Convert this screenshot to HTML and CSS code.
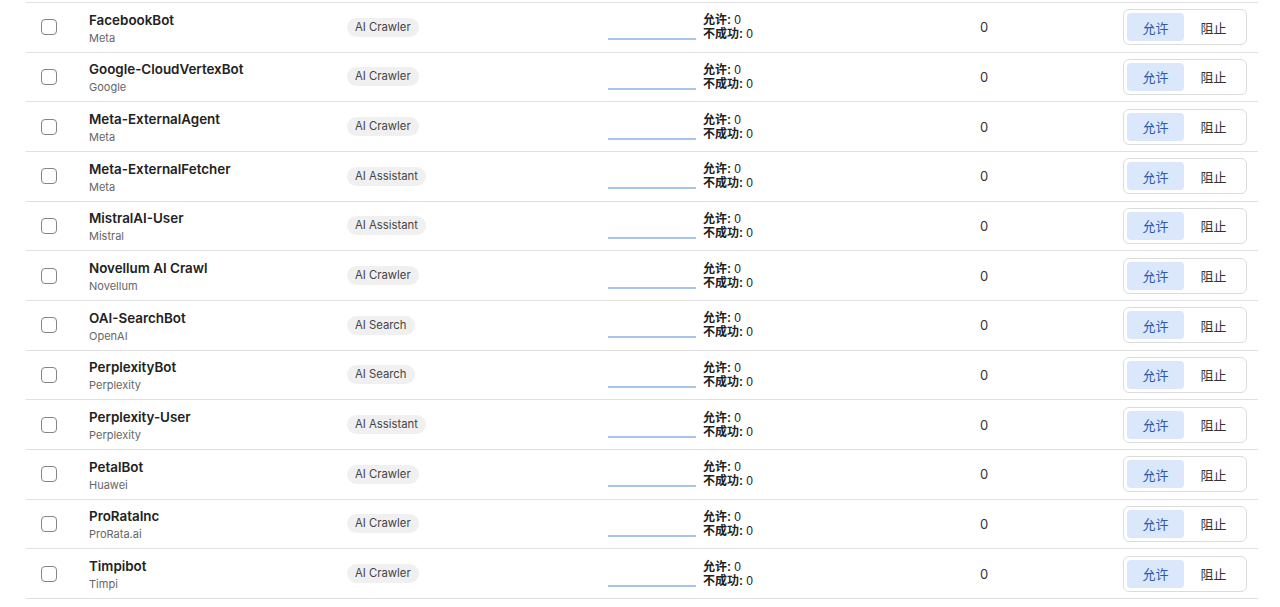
FILE: index.html
```html
<!DOCTYPE html>
<html lang="zh-CN">
<head>
  <meta charset="UTF-8" />
  <meta name="viewport" content="width=device-width, initial-scale=1.0" />
  <title>AI Crawlers</title>
  <link rel="stylesheet" href="styles.css">
</head>
<body>
  <div class="container">
    <div class="bot-table">

      <div class="bot-row">
        <div class="cell-check"><input type="checkbox" class="check" /></div>
        <div class="cell-name"><div class="bot-name">FacebookBot</div><div class="bot-owner">Meta</div></div>
        <div class="cell-type"><span class="tag">AI Crawler</span></div>
        <div class="cell-activity">
          <svg class="spark" width="88" height="28" viewBox="0 0 88 28"><line x1="0" y1="26" x2="88" y2="26" /></svg>
          <div class="stats"><div><b>允许:</b> 0</div><div><b>不成功:</b> 0</div></div>
        </div>
        <div class="cell-count">0</div>
        <div class="cell-actions"><div class="seg"><button class="seg-btn active">允许</button><button class="seg-btn">阻止</button></div></div>
      </div>

      <div class="bot-row">
        <div class="cell-check"><input type="checkbox" class="check" /></div>
        <div class="cell-name"><div class="bot-name">Google-CloudVertexBot</div><div class="bot-owner">Google</div></div>
        <div class="cell-type"><span class="tag">AI Crawler</span></div>
        <div class="cell-activity">
          <svg class="spark" width="88" height="28" viewBox="0 0 88 28"><line x1="0" y1="26" x2="88" y2="26" /></svg>
          <div class="stats"><div><b>允许:</b> 0</div><div><b>不成功:</b> 0</div></div>
        </div>
        <div class="cell-count">0</div>
        <div class="cell-actions"><div class="seg"><button class="seg-btn active">允许</button><button class="seg-btn">阻止</button></div></div>
      </div>

      <div class="bot-row">
        <div class="cell-check"><input type="checkbox" class="check" /></div>
        <div class="cell-name"><div class="bot-name">Meta-ExternalAgent</div><div class="bot-owner">Meta</div></div>
        <div class="cell-type"><span class="tag">AI Crawler</span></div>
        <div class="cell-activity">
          <svg class="spark" width="88" height="28" viewBox="0 0 88 28"><line x1="0" y1="26" x2="88" y2="26" /></svg>
          <div class="stats"><div><b>允许:</b> 0</div><div><b>不成功:</b> 0</div></div>
        </div>
        <div class="cell-count">0</div>
        <div class="cell-actions"><div class="seg"><button class="seg-btn active">允许</button><button class="seg-btn">阻止</button></div></div>
      </div>

      <div class="bot-row">
        <div class="cell-check"><input type="checkbox" class="check" /></div>
        <div class="cell-name"><div class="bot-name">Meta-ExternalFetcher</div><div class="bot-owner">Meta</div></div>
        <div class="cell-type"><span class="tag">AI Assistant</span></div>
        <div class="cell-activity">
          <svg class="spark" width="88" height="28" viewBox="0 0 88 28"><line x1="0" y1="26" x2="88" y2="26" /></svg>
          <div class="stats"><div><b>允许:</b> 0</div><div><b>不成功:</b> 0</div></div>
        </div>
        <div class="cell-count">0</div>
        <div class="cell-actions"><div class="seg"><button class="seg-btn active">允许</button><button class="seg-btn">阻止</button></div></div>
      </div>

      <div class="bot-row">
        <div class="cell-check"><input type="checkbox" class="check" /></div>
        <div class="cell-name"><div class="bot-name">MistralAI-User</div><div class="bot-owner">Mistral</div></div>
        <div class="cell-type"><span class="tag">AI Assistant</span></div>
        <div class="cell-activity">
          <svg class="spark" width="88" height="28" viewBox="0 0 88 28"><line x1="0" y1="26" x2="88" y2="26" /></svg>
          <div class="stats"><div><b>允许:</b> 0</div><div><b>不成功:</b> 0</div></div>
        </div>
        <div class="cell-count">0</div>
        <div class="cell-actions"><div class="seg"><button class="seg-btn active">允许</button><button class="seg-btn">阻止</button></div></div>
      </div>

      <div class="bot-row">
        <div class="cell-check"><input type="checkbox" class="check" /></div>
        <div class="cell-name"><div class="bot-name">Novellum AI Crawl</div><div class="bot-owner">Novellum</div></div>
        <div class="cell-type"><span class="tag">AI Crawler</span></div>
        <div class="cell-activity">
          <svg class="spark" width="88" height="28" viewBox="0 0 88 28"><line x1="0" y1="26" x2="88" y2="26" /></svg>
          <div class="stats"><div><b>允许:</b> 0</div><div><b>不成功:</b> 0</div></div>
        </div>
        <div class="cell-count">0</div>
        <div class="cell-actions"><div class="seg"><button class="seg-btn active">允许</button><button class="seg-btn">阻止</button></div></div>
      </div>

      <div class="bot-row">
        <div class="cell-check"><input type="checkbox" class="check" /></div>
        <div class="cell-name"><div class="bot-name">OAI-SearchBot</div><div class="bot-owner">OpenAI</div></div>
        <div class="cell-type"><span class="tag">AI Search</span></div>
        <div class="cell-activity">
          <svg class="spark" width="88" height="28" viewBox="0 0 88 28"><line x1="0" y1="26" x2="88" y2="26" /></svg>
          <div class="stats"><div><b>允许:</b> 0</div><div><b>不成功:</b> 0</div></div>
        </div>
        <div class="cell-count">0</div>
        <div class="cell-actions"><div class="seg"><button class="seg-btn active">允许</button><button class="seg-btn">阻止</button></div></div>
      </div>

      <div class="bot-row">
        <div class="cell-check"><input type="checkbox" class="check" /></div>
        <div class="cell-name"><div class="bot-name">PerplexityBot</div><div class="bot-owner">Perplexity</div></div>
        <div class="cell-type"><span class="tag">AI Search</span></div>
        <div class="cell-activity">
          <svg class="spark" width="88" height="28" viewBox="0 0 88 28"><line x1="0" y1="26" x2="88" y2="26" /></svg>
          <div class="stats"><div><b>允许:</b> 0</div><div><b>不成功:</b> 0</div></div>
        </div>
        <div class="cell-count">0</div>
        <div class="cell-actions"><div class="seg"><button class="seg-btn active">允许</button><button class="seg-btn">阻止</button></div></div>
      </div>

      <div class="bot-row">
        <div class="cell-check"><input type="checkbox" class="check" /></div>
        <div class="cell-name"><div class="bot-name">Perplexity-User</div><div class="bot-owner">Perplexity</div></div>
        <div class="cell-type"><span class="tag">AI Assistant</span></div>
        <div class="cell-activity">
          <svg class="spark" width="88" height="28" viewBox="0 0 88 28"><line x1="0" y1="26" x2="88" y2="26" /></svg>
          <div class="stats"><div><b>允许:</b> 0</div><div><b>不成功:</b> 0</div></div>
        </div>
        <div class="cell-count">0</div>
        <div class="cell-actions"><div class="seg"><button class="seg-btn active">允许</button><button class="seg-btn">阻止</button></div></div>
      </div>

      <div class="bot-row">
        <div class="cell-check"><input type="checkbox" class="check" /></div>
        <div class="cell-name"><div class="bot-name">PetalBot</div><div class="bot-owner">Huawei</div></div>
        <div class="cell-type"><span class="tag">AI Crawler</span></div>
        <div class="cell-activity">
          <svg class="spark" width="88" height="28" viewBox="0 0 88 28"><line x1="0" y1="26" x2="88" y2="26" /></svg>
          <div class="stats"><div><b>允许:</b> 0</div><div><b>不成功:</b> 0</div></div>
        </div>
        <div class="cell-count">0</div>
        <div class="cell-actions"><div class="seg"><button class="seg-btn active">允许</button><button class="seg-btn">阻止</button></div></div>
      </div>

      <div class="bot-row">
        <div class="cell-check"><input type="checkbox" class="check" /></div>
        <div class="cell-name"><div class="bot-name">ProRataInc</div><div class="bot-owner">ProRata.ai</div></div>
        <div class="cell-type"><span class="tag">AI Crawler</span></div>
        <div class="cell-activity">
          <svg class="spark" width="88" height="28" viewBox="0 0 88 28"><line x1="0" y1="26" x2="88" y2="26" /></svg>
          <div class="stats"><div><b>允许:</b> 0</div><div><b>不成功:</b> 0</div></div>
        </div>
        <div class="cell-count">0</div>
        <div class="cell-actions"><div class="seg"><button class="seg-btn active">允许</button><button class="seg-btn">阻止</button></div></div>
      </div>

      <div class="bot-row">
        <div class="cell-check"><input type="checkbox" class="check" /></div>
        <div class="cell-name"><div class="bot-name">Timpibot</div><div class="bot-owner">Timpi</div></div>
        <div class="cell-type"><span class="tag">AI Crawler</span></div>
        <div class="cell-activity">
          <svg class="spark" width="88" height="28" viewBox="0 0 88 28"><line x1="0" y1="26" x2="88" y2="26" /></svg>
          <div class="stats"><div><b>允许:</b> 0</div><div><b>不成功:</b> 0</div></div>
        </div>
        <div class="cell-count">0</div>
        <div class="cell-actions"><div class="seg"><button class="seg-btn active">允许</button><button class="seg-btn">阻止</button></div></div>
      </div>

    </div>
  </div>
</body>
</html>
```

FILE: styles.css
```css
/* Reset & Base */
* {
  margin: 0;
  padding: 0;
  box-sizing: border-box;
}

body {
  background-color: #ffffff;
  color: #222222;
  font-family: Inter, 'Noto Sans CJK SC', sans-serif;
  font-size: 13px;
}

.container {
  padding: 2px 22px 0 26px;
}

.bot-table {
  border-top: 1px solid #e0e0e0;
}

.bot-row {
  display: grid;
  grid-template-columns: 63px 258px 261px 372px 143px auto;
  align-items: center;
  height: 49.67px;
  padding-right: 11px;
  border-bottom: 1px solid #e0e0e0;
}

/* Checkbox */
.cell-check {
  padding-left: 15px;
  display: flex;
  align-items: center;
}

.check {
  appearance: none;
  -webkit-appearance: none;
  width: 16px;
  height: 16px;
  border: 1px solid #858585;
  border-radius: 4px;
  background: #fff;
}

/* Name */
.cell-name {
  padding-top: 2px;
}

.bot-name {
  font-weight: 600;
  font-size: 13.4px;
  line-height: 16px;
  color: #222;
}

.bot-owner {
  font-size: 11px;
  line-height: 14px;
  margin-top: 3px;
  color: #666;
}

/* Type tag */
.tag {
  display: inline-block;
  background-color: #f0f0f0;
  color: #444;
  font-size: 11.3px;
  line-height: 19px;
  padding: 0 8px;
  border-radius: 10px;
}

/* Activity */
.cell-activity {
  display: flex;
  align-items: center;
  gap: 7px;
}

.spark line {
  stroke: #a6c4ef;
  stroke-width: 2;
}

.stats {
  font-family: 'Liberation Sans', 'Noto Sans CJK SC', sans-serif;
  font-size: 12px;
  line-height: 14px;
  color: #222;
}

.stats b {
  font-weight: 700;
}

.cell-count {
  font-size: 13px;
  color: #333;
}

/* Allow / block switch */
.seg {
  display: flex;
  padding: 3px;
  border: 1px solid #dcdcdc;
  border-radius: 6px;
  background: #fff;
}

.seg-btn {
  border: none;
  background: transparent;
  font-family: 'Noto Sans CJK SC', sans-serif;
  font-size: 13px;
  color: #333;
  width: 59px;
  height: 28px;
  border-radius: 4px;
}

.seg-btn.active {
  width: 57px;
  background-color: #dbe8fb;
  color: #2a5aa8;
}
```
